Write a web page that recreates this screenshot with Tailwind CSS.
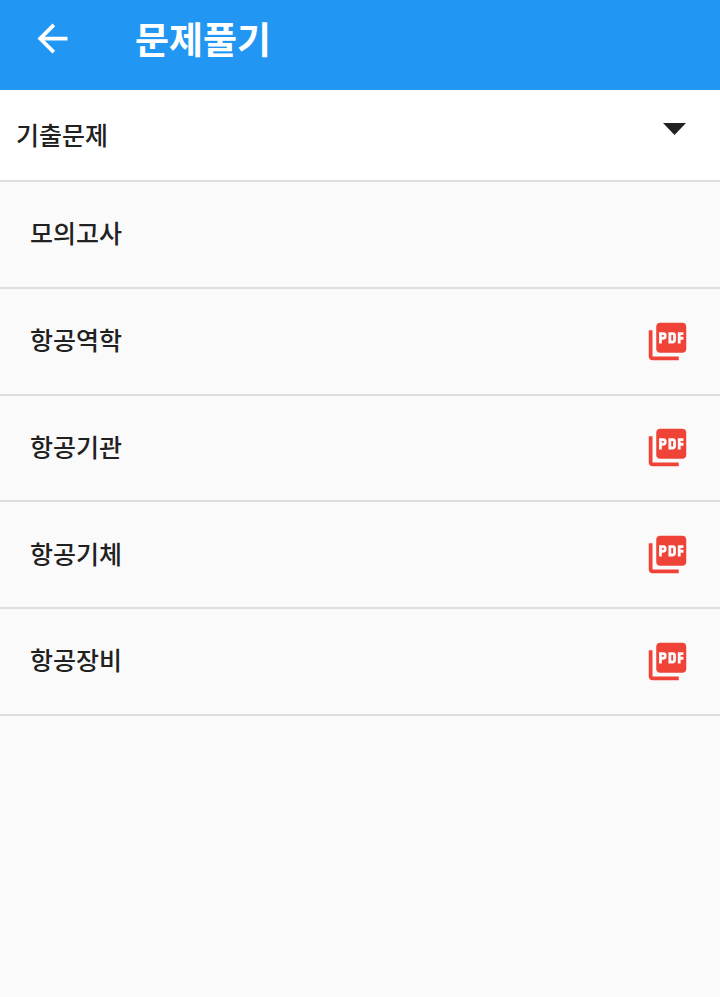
<!DOCTYPE html>
<html lang="ko">
<head>
<meta charset="utf-8">
<meta name="viewport" content="width=device-width, initial-scale=1">
<title>문제풀기</title>
<script src="https://cdn.jsdelivr.net/npm/@tailwindcss/browser@4"></script>
</head>
<body class="min-h-screen bg-[#fafafa] font-['Noto_Sans_CJK_KR',sans-serif] text-[#212121]">
<svg class="hidden" aria-hidden="true">
<symbol id="pdf" viewBox="0 0 24 24"><path fill="currentColor" d="M20 2H8c-1.100 0-2 .9-2 2v12c0 1.100.9 2 2 2h12c1.100 0 2-.9 2-2V4c0-1.100-.9-2-2-2zm-8.500 7.500c0 .83-.67 1.500-1.500 1.500H9v2H7.500V7H10c.83 0 1.500.67 1.500 1.500v1zm5 2c0 .83-.67 1.500-1.500 1.500h-2.500V7H15c.83 0 1.500.67 1.500 1.500v3zm4-3H19v1h1.500V11H19v2h-1.500V7h3v1.500zM9 9.500h1v-1H9v1zM4 6H2v14c0 1.100.9 2 2 2h14v-2H4V6zm10 5.500h1v-3h-1v3z"/></symbol>
</svg>
<header class="flex h-[90px] items-center bg-[#2196f3] pb-[14px] pl-[30px] text-white">
<button type="button" aria-label="뒤로" class="mr-[60px]"><svg class="size-[45px]" viewBox="0 0 24 24" fill="currentColor"><path d="M20 11H7.830l5.590-5.590L12 4l-8 8 8 8 1.410-1.410L7.830 13H20v-2z"/></svg></button>
<h1 class="text-[37px] leading-[54px] font-bold">문제풀기</h1>
</header>
<main>
<div class="grid h-[92px] items-center border-b-2 border-[#dedede] bg-white">
<select aria-label="문제 종류" class="col-start-1 row-start-1 h-full w-full appearance-none bg-transparent pl-4 text-[25px] font-medium">
<option>기출문제</option>
</select>
<svg class="pointer-events-none col-start-1 row-start-1 mr-[34px] mb-3 h-3 w-[23px] justify-self-end" viewBox="0 0 24 12" fill="currentColor" preserveAspectRatio="none" aria-hidden="true"><path d="M0 0h24L12 12z"/></svg>
</div>
<ul class="grid h-[534px] grid-rows-5 text-[25px] font-medium">
<li class="flex items-center justify-between border-b-2 border-[#dedede] pr-[30px] pl-[30px]"><a href="#mock" class="pb-[3px]">모의고사</a></li>
<li class="flex items-center justify-between border-b-2 border-[#dedede] pr-[30px] pl-[30px]"><a href="#aero" class="pb-[3px]">항공역학</a><button type="button" aria-label="항공역학 PDF" class="text-[#ef4338]"><svg class="size-[45px]"><use href="#pdf"/></svg></button></li>
<li class="flex items-center justify-between border-b-2 border-[#dedede] pr-[30px] pl-[30px]"><a href="#engine" class="pb-[3px]">항공기관</a><button type="button" aria-label="항공기관 PDF" class="text-[#ef4338]"><svg class="size-[45px]"><use href="#pdf"/></svg></button></li>
<li class="flex items-center justify-between border-b-2 border-[#dedede] pr-[30px] pl-[30px]"><a href="#airframe" class="pb-[3px]">항공기체</a><button type="button" aria-label="항공기체 PDF" class="text-[#ef4338]"><svg class="size-[45px]"><use href="#pdf"/></svg></button></li>
<li class="flex items-center justify-between border-b-2 border-[#dedede] pr-[30px] pl-[30px]"><a href="#equipment" class="pb-[3px]">항공장비</a><button type="button" aria-label="항공장비 PDF" class="text-[#ef4338]"><svg class="size-[45px]"><use href="#pdf"/></svg></button></li>
</ul>
</main>
</body>
</html>
